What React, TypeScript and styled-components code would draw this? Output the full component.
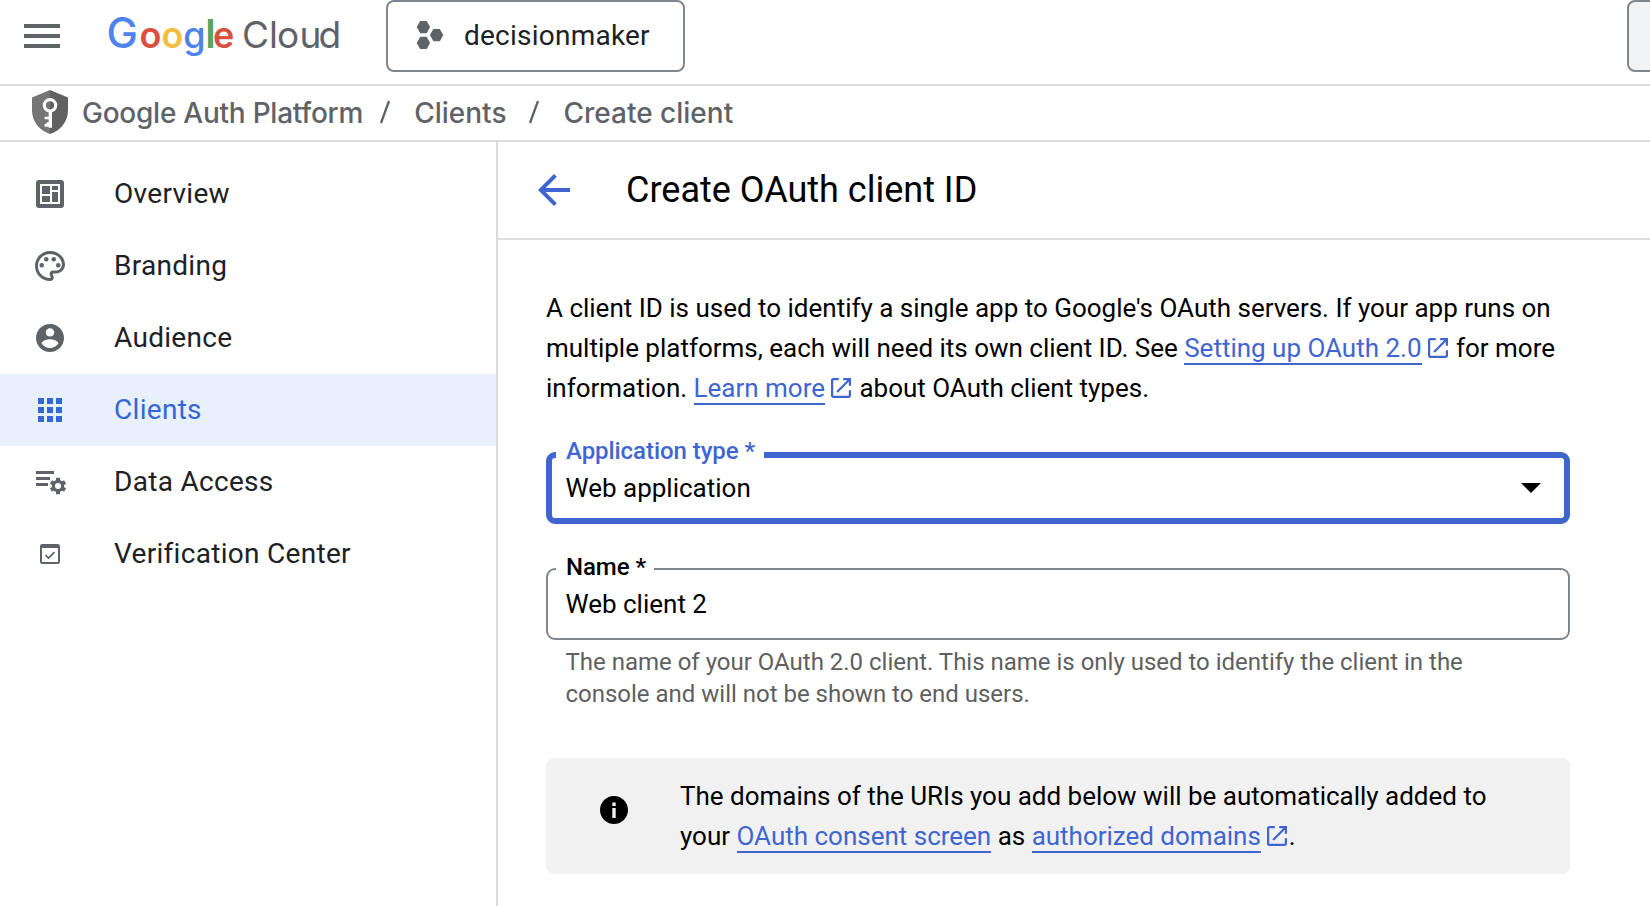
import React from 'react';
import styled, { createGlobalStyle } from 'styled-components';
import { MdArrowBack, MdMenu, MdOutlinePalette } from 'react-icons/md';

const GlobalStyle = createGlobalStyle`
  *, *::before, *::after { box-sizing: border-box; }
  html, body { margin: 0; padding: 0; }
  body {
    background: #fff;
    color: #000;
    font-family: Roboto, "Liberation Sans", sans-serif;
    overflow: hidden;
  }
`;

const line = '#dadce0';
const grey = '#5f6368';
const blue = '#3f66d0';

const Page = styled.div`
  width: 100%;
  height: 906px;
  display: flex;
  flex-direction: column;
  overflow: hidden;
`;

const Header = styled.header`
  height: 86px;
  flex: none;
  display: flex;
  align-items: flex-start;
  border-bottom: 2px solid ${line};
  padding-left: 18px;
`;

const MenuButton = styled.button`
  width: 48px;
  height: 72px;
  padding: 0;
  border: 0;
  background: none;
  color: ${grey};
  display: flex;
  align-items: center;
`;

const Logo = styled.svg`
  flex: none;
  margin-left: 36px;
  display: block;
`;

const ProjectPicker = styled.button`
  width: 299px;
  height: 72px;
  margin-left: 36px;
  padding: 0 0 2px 28px;
  display: flex;
  align-items: center;
  gap: 20px;
  border: 2px solid #80868b;
  border-radius: 8px;
  background: #fff;
  color: #202124;
  font: 400 28px Roboto, sans-serif;
  letter-spacing: 0.23px;
`;

const SearchBox = styled.div`
  flex: none;
  width: 120px;
  height: 72px;
  margin-left: auto;
  margin-right: -97px;
  border: 2px solid #80868b;
  border-radius: 8px;
  background: #f1f3f4;
`;

const Breadcrumbs = styled.nav`
  height: 56px;
  flex: none;
  display: flex;
  align-items: center;
  padding: 0 0 2px 32px;
  border-bottom: 2px solid ${line};
  color: ${grey};
  font: 500 28px/34px Inter, sans-serif;
`;

const Product = styled.span`
  margin: 1px 16px 0 14px;
  letter-spacing: -0.25px;
  font-feature-settings: 'liga' 1, 'calt' 1;
`;

const Crumb = styled.span`
  margin: 1px 22px 0 23px;
`;

const Slash = styled.svg`
  display: block;
  flex: none;
`;

const Body = styled.div`
  flex: 1;
  display: flex;
  min-height: 0;
`;

const Sidebar = styled.aside`
  width: 498px;
  flex: none;
  padding-top: 16px;
  border-right: 2px solid ${line};
`;

const NavItem = styled.a<{ $active?: boolean }>`
  height: 72px;
  display: flex;
  align-items: center;
  gap: 46px;
  padding-left: 32px;
  color: ${p => (p.$active ? '#3367d6' : '#202124')};
  background: ${p => (p.$active ? '#e8effd' : 'transparent')};
  font-size: 28px;
  letter-spacing: 0.3px;
`;

const IconSlot = styled.span<{ $active?: boolean }>`
  width: 36px;
  height: 36px;
  display: flex;
  align-items: center;
  justify-content: center;
  color: ${p => (p.$active ? '#3367d6' : grey)};
`;

const NavLabel = styled.span`
  padding-bottom: 2px;
`;

const Main = styled.main`
  flex: 1;
  min-width: 0;
`;

const TitleBar = styled.div`
  height: 98px;
  display: flex;
  align-items: center;
  gap: 48px;
  padding-left: 32px;
  border-bottom: 2px solid #dfdfe0;
  color: ${blue};
`;

const Title = styled.h1`
  margin: 0;
  color: #000;
  font-weight: 400;
  font-size: 36px;
`;

const Content = styled.div`
  width: 1072px;
  padding: 48px 0 0 48px;
`;

const Intro = styled.p`
  margin: 0 0 44px;
  font-size: 26px;
  line-height: 40px;
  letter-spacing: -0.008px;
`;

const Link = styled.a`
  color: ${blue};
  border-bottom: 2px solid ${blue};
`;

const ExternalIcon = styled.svg`
  width: 20px;
  height: 20px;
  margin: 0 2px 0 6px;
  vertical-align: -1px;
  fill: ${blue};
`;

const Field = styled.div<{ $focused?: boolean }>`
  --edge: ${p => (p.$focused ? '6px' : '2px')};
  position: relative;
  height: 72px;
  border: var(--edge) solid ${p => (p.$focused ? blue : '#80868b')};
  border-radius: 9px;
  padding: calc(16px - var(--edge)) calc(29px - var(--edge)) 0 calc(19.5px - var(--edge));
  display: flex;
  justify-content: space-between;
  align-items: flex-start;
  font-size: 26px;
  line-height: 40px;
  margin-bottom: ${p => (p.$focused ? '44px' : '6px')};
`;

const FieldLabel = styled.label<{ $focused?: boolean }>`
  position: absolute;
  top: calc(-15px - var(--edge));
  left: calc(10px - var(--edge));
  padding: 0 8.5px 0 10px;
  background: #fff;
  color: ${p => (p.$focused ? blue : '#000')};
  font-weight: 500;
  font-size: 24px;
  line-height: 28px;
  letter-spacing: -0.06px;
`;

const Arrow = styled.svg`
  margin-top: 15px;
`;

const Helper = styled.p`
  margin: 0 0 48px;
  padding: 0 40px 0 19.5px;
  color: #5f5f5f;
  font-size: 24px;
  line-height: 32px;
  letter-spacing: -0.008px;
`;

const Notice = styled.div`
  display: flex;
  align-items: flex-start;
  gap: 52px;
  padding: 18px 48px 18px 54px;
  border-radius: 8px;
  background: #f1f1f1;
  font-size: 26px;
  line-height: 40px;
  letter-spacing: -0.01px;
`;

const InfoIcon = styled.svg`
  flex: none;
  margin-top: 20px;
`;

function GoogleCloudLogo() {
  return (
    <Logo width="248" height="72" viewBox="102 0 248 72" fontFamily="Inter, sans-serif">
      <g fontWeight="600">
        <text x="106.5" y="47.5" fontSize="42" fontWeight="500" fill="#4e82ee">G</text>
        <text x="139.5" y="47.5" fontSize="36" fill="#d9503f">o</text>
        <text x="161.5" y="47.5" fontSize="36" fill="#f2be42">o</text>
        <text x="183.300" y="47.5" fontSize="36" fontWeight="500" fill="#4e82ee">g</text>
        <text x="205.2" y="47.5" fontSize="40" fill="#58a55c">l</text>
        <text x="213" y="47.5" fontSize="36" fill="#d9503f">e</text>
      </g>
      <text
        x="242 269 277 299.500 318.500"
        y="47.5"
        fontSize="37"
        fontWeight="400"
        fill={grey}
      >
        Cloud
      </text>
    </Logo>
  );
}

function ProjectIcon() {
  const hex = 'M0 6.1 3.5 0h6.4l3.5 6.1-3.5 6.2H3.5z';
  return (
    <svg width="28" height="28" viewBox="0 0 28 28" fill={grey}>
      <path d={hex} transform="translate(.7 0)" />
      <path d={hex} transform="translate(13.9 7.9)" />
      <path d={hex} transform="translate(.7 15.8)" />
    </svg>
  );
}

function ShieldIcon() {
  return (
    <svg width="36" height="44" viewBox="0 0 36 44">
      <path d="M18 0 0 7.5V20c0 11.500 7.500 21 18 24z" fill="#757575" />
      <path d="M18 0l18 7.500V20c0 11.500-7.500 21-18 24z" fill="#616161" />
      <circle cx="18" cy="15.300" r="5.700" fill="none" stroke="#fff" strokeWidth="3.200" />
      <path d="M16.700 21.500h3.300v16.300h-3.300v-1h-4v-3h2v-1.500h2v-3h-4v-2.600h4z" fill="#fff" />
    </svg>
  );
}

function OverviewIcon() {
  return (
    <svg width="28" height="28" viewBox="0 0 28 28" fill="currentColor">
      <rect width="28" height="28" rx="3" />
      <rect x="4" y="4" width="20" height="20" fill="#fff" />
      <path d="M6 6h8v8H6zM6 16h8v6H6zM16 6h6v4h-6zM16 12h6v10h-6z" />
    </svg>
  );
}

function AudienceIcon() {
  return (
    <svg width="28" height="28" viewBox="2 2 20 20" fill="currentColor">
      <path d="M12 2C6.480 2 2 6.480 2 12s4.480 10 10 10 10-4.480 10-10S17.520 2 12 2zm0 3c1.660 0 3 1.340 3 3s-1.340 3-3 3-3-1.340-3-3 1.340-3 3-3zm0 14.200c-2.500 0-4.710-1.280-6-3.220.030-1.990 4-3.080 6-3.080 1.990 0 5.970 1.090 6 3.080-1.290 1.940-3.500 3.220-6 3.220z" />
    </svg>
  );
}

function ClientsIcon() {
  return (
    <svg width="24" height="24" viewBox="0 0 24 24" fill="currentColor">
      {[0, 9, 18].map(y =>
        [0, 9, 18].map(x => <rect key={`${x}-${y}`} x={x} y={y} width="6" height="6" />),
      )}
    </svg>
  );
}

function DataAccessIcon() {
  return (
    <svg width="36" height="36" viewBox="0 0 36 36" fill="currentColor">
      <path d="M4 7h18v3H4zM4 13h14v3H4zM4 19h12v3H4z" />
      <g transform="translate(26 22)">
        <circle r="4.600" fill="none" stroke="currentColor" strokeWidth="3.200" />
        {[0, 60, 120, 180, 240, 300].map(a => (
          <rect key={a} x="-2" y="-8.200" width="4" height="4" transform={`rotate(${a})`} />
        ))}
      </g>
    </svg>
  );
}

function VerificationIcon() {
  return (
    <svg width="20" height="20" viewBox="0 0 20 20" fill="none" stroke="currentColor">
      <rect x="1" y="1" width="18" height="18" rx="1.300" strokeWidth="2" />
      <path d="M1 2.500h18" strokeWidth="3" />
      <path d="M5.600 11.200l2.900 2.900 6-6" strokeWidth="1.700" />
    </svg>
  );
}

function External() {
  return (
    <ExternalIcon viewBox="3 3 18 18">
      <path d="M19 19H5V5h5V3H5c-1.110 0-2 .9-2 2v14c0 1.100.890 2 2 2h14c1.100 0 2-.9 2-2v-5h-2v5zM14 3v2h3.590l-9.830 9.830 1.410 1.410L19 6.410V10h2V3h-7z" />
    </ExternalIcon>
  );
}

function Separator() {
  return (
    <Slash width="12" height="24" viewBox="0 0 12 24">
      <path d="M10 1 2 23" stroke={grey} strokeWidth="2.300" />
    </Slash>
  );
}

const navItems = [
  { label: 'Overview', icon: <OverviewIcon /> },
  { label: 'Branding', icon: <MdOutlinePalette size={36} /> },
  { label: 'Audience', icon: <AudienceIcon /> },
  { label: 'Clients', icon: <ClientsIcon />, active: true },
  { label: 'Data Access', icon: <DataAccessIcon /> },
  { label: 'Verification Center', icon: <VerificationIcon /> },
];

export default function App() {
  return (
    <Page>
      <GlobalStyle />
      <Header>
        <MenuButton aria-label="Main menu">
          <MdMenu size={48} />
        </MenuButton>
        <GoogleCloudLogo />
        <ProjectPicker>
          <ProjectIcon />
          decisionmaker
        </ProjectPicker>
        <SearchBox />
      </Header>
      <Breadcrumbs>
        <ShieldIcon />
        <Product>Google Auth Platform</Product>
        <Separator />
        <Crumb>Clients</Crumb>
        <Separator />
        <Crumb>Create client</Crumb>
      </Breadcrumbs>
      <Body>
        <Sidebar>
          {navItems.map(item => (
            <NavItem key={item.label} $active={item.active}>
              <IconSlot $active={item.active}>{item.icon}</IconSlot>
              <NavLabel>{item.label}</NavLabel>
            </NavItem>
          ))}
        </Sidebar>
        <Main>
          <TitleBar>
            <MdArrowBack size={48} />
            <Title>Create OAuth client ID</Title>
          </TitleBar>
          <Content>
            <Intro>
              A client ID is used to identify a single app to Google's OAuth servers. If your app
              runs on multiple platforms, each will need its own client ID. See{' '}
              <Link>Setting up OAuth 2.0</Link>
              <External /> for more information. <Link>Learn more</Link>
              <External /> about OAuth client types.
            </Intro>
            <Field $focused>
              <FieldLabel $focused>Application type *</FieldLabel>
              Web application
              <Arrow width="20" height="10" viewBox="0 0 20 10">
                <path d="M0 0h20L10 10z" />
              </Arrow>
            </Field>
            <Field>
              <FieldLabel>Name *</FieldLabel>
              Web client 2
            </Field>
            <Helper>
              The name of your OAuth 2.0 client. This name is only used to identify the client in
              the console and will not be shown to end users.
            </Helper>
            <Notice>
              <InfoIcon width="28" height="28" viewBox="2 2 20 20">
                <path d="M12 2C6.480 2 2 6.480 2 12s4.480 10 10 10 10-4.480 10-10S17.520 2 12 2zm1.200 15.800h-2.400v-7.200h2.400v7.200zm0-8.700h-2.400V6.700h2.400v2.400z" />
              </InfoIcon>
              <div>
                The domains of the URIs you add below will be automatically added to your{' '}
                <Link>OAuth consent screen</Link> as <Link>authorized domains</Link>
                <External />.
              </div>
            </Notice>
          </Content>
        </Main>
      </Body>
    </Page>
  );
}
